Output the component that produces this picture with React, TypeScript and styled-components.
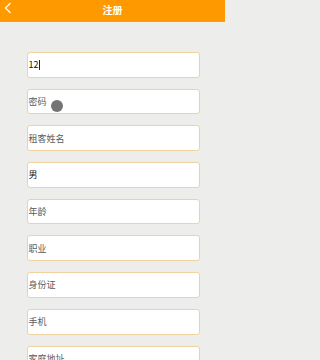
import React from "react";
import styled, { createGlobalStyle } from "styled-components";

const Global = createGlobalStyle`
  html, body { margin: 0; padding: 0; background: #ededeb; }
  body { font-family: "Noto Sans CJK SC", "Noto Sans", sans-serif; overflow: hidden; }
`;

const Page = styled.div`
  width: 100%;
  max-width: 225px;
  height: 360px;
  background: #ededeb;
  position: relative;
  overflow: hidden;
`;

const Header = styled.div`
  height: 22px;
  background: #ff9900;
  border-bottom: 1px solid #f6f3ee;
  display: flex;
  align-items: center;
  justify-content: center;
  position: relative;
`;

const Back = styled.button`
  position: absolute;
  left: 3px;
  top: 2px;
  width: 10px;
  height: 12px;
  padding: 0;
  border: none;
  background: transparent;
  display: flex;
`;

const Title = styled.div`
  color: #fff;
  font-size: 10px;
  font-weight: 700;
  line-height: 1;
  margin-top: -2px;
`;

const Form = styled.div`
  display: flex;
  flex-direction: column;
  gap: 11px;
  padding: 29px 25.5px 0 27px;
`;

const Field = styled.div`
  box-sizing: border-box;
  height: 25.7px;
  background: #fff;
  border: 1px solid #f0d2a0;
  border-radius: 3px;
  display: flex;
  align-items: center;
  padding-left: 0.5px;
  font-size: 9px;
  line-height: 1;
`;

const Text = styled.span<{ $placeholder?: boolean }>`
  color: ${(p) => (p.$placeholder ? "#5a5a5a" : "#111")};
`;

const Caret = styled.span`
  display: inline-block;
  width: 1px;
  height: 10px;
  background: #222;
  margin-left: 0.5px;
`;

const Touch = styled.div`
  position: absolute;
  left: 50.5px;
  top: 99.5px;
  width: 12.5px;
  height: 12.5px;
  border-radius: 50%;
  background: #747474;
`;

const fields: { text: string; placeholder?: boolean; caret?: boolean }[] = [
  { text: "12", caret: true },
  { text: "密码", placeholder: true },
  { text: "租客姓名", placeholder: true },
  { text: "男" },
  { text: "年龄", placeholder: true },
  { text: "职业", placeholder: true },
  { text: "身份证", placeholder: true },
  { text: "手机", placeholder: true },
  { text: "家庭地址", placeholder: true },
];

export default function App() {
  return (
    <Page>
      <Global />
      <Header>
        <Back aria-label="back">
          <svg width="10" height="12" viewBox="0 0 10 12">
            <path d="M7.5 1 L2.5 6 L7.5 11" fill="none" stroke="#fff6dc" strokeWidth="1.5" />
          </svg>
        </Back>
        <Title>注册</Title>
      </Header>
      <Form>
        {fields.map((f, i) => (
          <Field key={i}>
            <Text $placeholder={f.placeholder}>{f.text}</Text>
            {f.caret && <Caret />}
          </Field>
        ))}
      </Form>
      <Touch />
    </Page>
  );
}
